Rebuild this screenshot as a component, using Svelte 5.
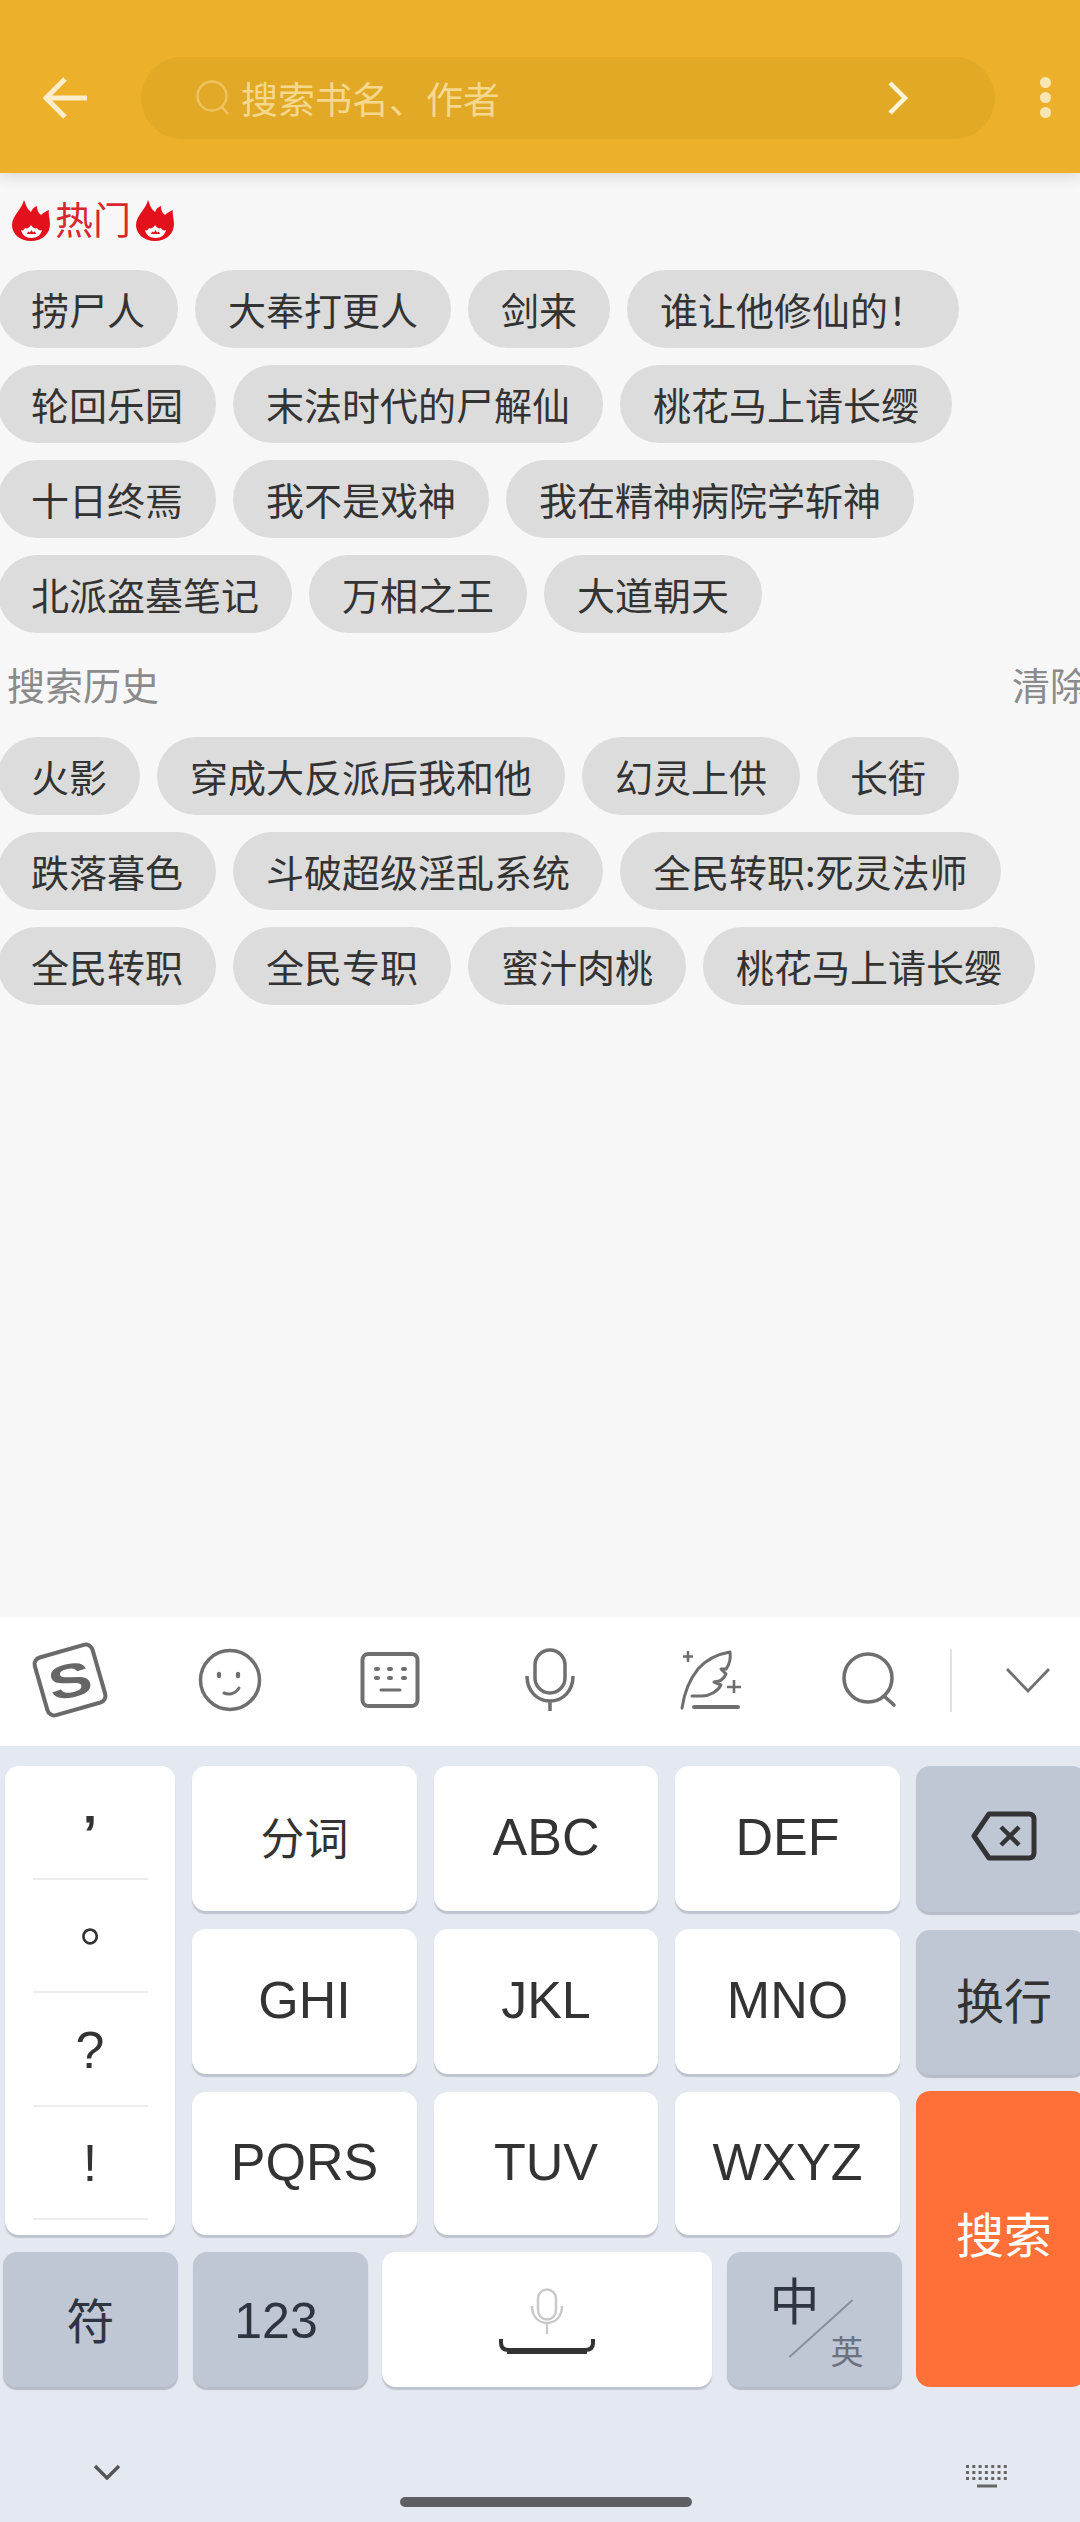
<script>
  const hot = ['捞尸人','大奉打更人','剑来','谁让他修仙的！','轮回乐园','末法时代的尸解仙','桃花马上请长缨','十日终焉','我不是戏神','我在精神病院学斩神','北派盗墓笔记','万相之王','大道朝天'];
  const history = ['火影','穿成大反派后我和他','幻灵上供','长街','跌落暮色','斗破超级淫乱系统','全民转职:死灵法师','全民转职','全民专职','蜜汁肉桃','桃花马上请长缨'];
  const letters = ['分词','ABC','DEF','GHI','JKL','MNO','PQRS','TUV','WXYZ'];
  const punct = [['’','p-comma'],['。','p-stop'],['?','p-q'],['!','p-ex']];
</script>

{#snippet flame()}
  <svg class="flame" viewBox="0 0 38 41" aria-hidden="true">
    <path fill="#e2111b" d="M12 0 C14 5 15 9 19 12 C20 9 22 7 25 6 C25 10 26 13 29 15 C31 13 34 11 37 10 C36 13 38 19 38 24 C38 34 30 41 19 41 C8 41 0 34 0 25 C0 16 10 9 12 0 Z"/>
    <path fill="#fff" d="M9 30 C11 31 12 30 13 28 C15 29 17 28 19 25 C21 28 23 29 25 28 C26 30 28 31 30 30 C29 35 25 38 19.500 38 C14 38 10 35 9 30 Z"/>
    <path fill="#e2111b" d="M15 34 L16 31.500 L18 32.500 L19.500 30 L21 32.500 L23 31.500 L24 34 Z"/>
  </svg>
{/snippet}

<div class="page">
  <header class="top">
    <svg class="back" viewBox="0 0 46 44" aria-hidden="true"><path d="M22 3 3 22l19 19M4 22h40" fill="none" stroke="#fbeccb" stroke-width="5"/></svg>
    <div class="search">
      <svg class="lens" viewBox="0 0 36 36" aria-hidden="true"><circle cx="17" cy="16" r="14.5" fill="none" stroke="#efc264" stroke-width="2.4"/><path d="m27 27 6 7" stroke="#efc264" stroke-width="2.4"/></svg>
      <span class="ph">搜索书名、作者</span>
      <svg class="go" viewBox="0 0 22 34" aria-hidden="true"><path d="m3 2 15 15L3 32" fill="none" stroke="#fdf3d8" stroke-width="4.5"/></svg>
    </div>
    <div class="dots"><i></i><i></i><i></i></div>
  </header>

  <main class="content">
    <div class="hot-title">{@render flame()}<span>热门</span>{@render flame()}</div>
    <div class="chips">
      {#each hot as c}<span class="chip">{c}</span>{/each}
    </div>
    <div class="hist-title"><span>搜索历史</span><span>清除</span></div>
    <div class="chips">
      {#each history as c}<span class="chip">{c}</span>{/each}
    </div>
  </main>

  <section class="ime">
    <div class="tools">
      <div class="tool">
        <svg width="80" height="78" viewBox="0 0 80 78" aria-hidden="true">
          <rect x="-30" y="-30" width="60" height="60" rx="7" fill="#fff" stroke="#6a6a6a" stroke-width="4" transform="translate(40 39) rotate(-16)"/>
          <text class="s" text-anchor="middle" transform="translate(40 39) rotate(-12) scale(1.3 .95)" y="18">S</text>
        </svg>
      </div>
      <div class="tool">
        <svg width="64" height="64" viewBox="0 0 64 64" aria-hidden="true"><circle cx="32" cy="32" r="29.5" fill="none" stroke="#6f6f6f" stroke-width="3.5"/><ellipse cx="21" cy="27" rx="2.200" ry="3.200" fill="#6f6f6f"/><ellipse cx="40" cy="27" rx="2.200" ry="3.200" fill="#6f6f6f"/><path d="M26 45c5 2 11 1 15-5" fill="none" stroke="#6f6f6f" stroke-width="3" stroke-linecap="round"/></svg>
      </div>
      <div class="tool">
        <svg width="60" height="58" viewBox="0 0 60 58" aria-hidden="true"><rect x="2.500" y="3" width="55" height="52" rx="6" fill="none" stroke="#6f6f6f" stroke-width="4"/><g stroke="#6f6f6f" stroke-width="4" stroke-linecap="round"><path d="M16 18h2M29 18h2M43 18h2M16 27h2M29 27h2M43 27h2"/><path d="M21 39h19" stroke-width="3"/></g></svg>
      </div>
      <div class="tool">
        <svg width="50" height="64" viewBox="0 0 50 64" aria-hidden="true"><rect x="10" y="2" width="30" height="43" rx="15" fill="none" stroke="#6f6f6f" stroke-width="3.5"/><path d="M2 28c0 15 10 25 23 25s23-10 23-25M25 53v10" fill="none" stroke="#6f6f6f" stroke-width="3.5"/></svg>
      </div>
      <div class="tool">
        <svg width="64" height="62" viewBox="0 0 64 62" aria-hidden="true"><g fill="none" stroke="#6f6f6f" stroke-width="3" stroke-linecap="round" stroke-linejoin="round"><path d="M4 59C6 45 12 30 20 20 28 11 40 5 52 3c1 7-1 13-4 17h-5l5 5c-2 4-4 6-7 7l-5 1 7 3c-3 6-11 11-19 11H14"/></g><path d="M16 58h44" stroke="#6f6f6f" stroke-width="4" stroke-linecap="round"/><path d="M10 2v11M5 7.500h10M56 31v13M49 38h14" stroke="#6f6f6f" stroke-width="2.600"/></svg>
      </div>
      <div class="tool">
        <svg width="58" height="56" viewBox="0 0 58 56" aria-hidden="true"><circle cx="27" cy="26" r="24" fill="none" stroke="#6f6f6f" stroke-width="3.6"/><path d="m43 44 10 9" stroke="#6f6f6f" stroke-width="3.6" stroke-linecap="round"/></svg>
      </div>
      <span class="rule"></span>
      <svg class="fold" width="46" height="26" viewBox="0 0 46 26" aria-hidden="true"><path d="M2 2l21 22L44 2" fill="none" stroke="#707070" stroke-width="2.8"/></svg>
    </div>

    <div class="keys">
      <div class="left">
        <div class="grid">
          <div class="key punct">
            {#each punct as [p, cls]}<span class="cell {cls}">{p}</span>{/each}
          </div>
          {#each letters as k, i}
            <div class="key" class:cjk={i === 0}>{k}</div>
          {/each}
        </div>
        <div class="bottom">
          <div class="key gray narrow cjk2">符</div>
          <div class="key gray narrow num">123</div>
          <div class="key space">
            <svg width="34" height="46" viewBox="0 0 34 46" aria-hidden="true"><rect x="8" y="1.500" width="18" height="30" rx="9" fill="none" stroke="#c9c9c9" stroke-width="2.4"/><path d="M2 18c0 10 6 17 15 17s15-7 15-17M17 35v11" fill="none" stroke="#c9c9c9" stroke-width="2.4"/></svg>
            <svg width="96" height="16" viewBox="0 0 96 16" aria-hidden="true"><path d="M2 0v4c0 5 3 7 8 7h76c5 0 8-2 8-7V0" fill="none" stroke="#333" stroke-width="4"/><path d="M8 9h80v6H8z" fill="#333"/></svg>
          </div>
          <div class="key gray narrow lang">
            <span class="zh">中</span><span class="slash"></span><span class="en">英</span>
          </div>
        </div>
      </div>
      <div class="right">
        <div class="key gray side">
          <svg width="66" height="50" viewBox="0 0 66 50" aria-hidden="true"><path d="M18 3h40c3 0 5 2 5 5v34c0 3-2 5-5 5H18L3 25Z" fill="none" stroke="#333" stroke-width="5" stroke-linejoin="round"/><path d="m30 16 18 18M48 16 30 34" stroke="#333" stroke-width="4.500"/></svg>
        </div>
        <div class="key gray side cjk3">换行</div>
        <div class="key go-key">搜索</div>
      </div>
    </div>

    <footer class="foot">
      <svg width="28" height="16" viewBox="0 0 28 16" aria-hidden="true"><path d="m2 2 12 12L26 2" fill="none" stroke="#555" stroke-width="3.4"/></svg>
      <svg width="44" height="24" viewBox="0 0 44 24" aria-hidden="true"><g stroke="#666" stroke-width="3" stroke-dasharray="3 3.300"><path d="M1 2.500h42M1 8.500h42M1 14.500h42"/></g><path d="M12 22h20" stroke="#666" stroke-width="3"/></svg>
      <span class="home"></span>
    </footer>
  </section>
</div>

<style>
  :global(body) { margin: 0; background: #f7f7f7; }
  .page {
    width: 1080px; height: 2522px; display: flex; flex-direction: column; overflow: hidden;
    font-family: "Noto Sans CJK SC", sans-serif; color: #333;
  }

  .top {
    height: 173px; flex: none; background: #edb02b; display: flex; align-items: center;
    padding: 22px 0 0 43px; box-sizing: border-box; box-shadow: 0 4px 14px rgba(0,0,0,.12); position: relative;
  }
  .back { width: 46px; height: 44px; flex: none; }
  .search {
    width: 854px; height: 82px; margin-left: 52px; border-radius: 41px; background: #e1a925;
    display: flex; align-items: center; padding: 0 86px 0 54px; box-sizing: border-box; flex: none;
  }
  .lens { width: 36px; height: 36px; flex: none; }
  .ph { font-size: 37px; line-height: 50px; color: #f5d88e; margin-left: 10px; flex: 1; }
  .go { width: 22px; height: 34px; flex: none; }
  .dots { display: flex; flex-direction: column; gap: 4px; margin-left: 45px; }
  .dots i { width: 11px; height: 11px; border-radius: 50%; background: #f9e6b4; }

  .content { flex: 1; min-height: 0; }
  .hot-title {
    display: flex; align-items: center; gap: 5px; height: 41px; margin: 27px 0 29px 12px;
    color: #d92731; font-size: 38px; line-height: 41px;
  }
  .hot-title span { padding-bottom: 6px; }
  .flame { width: 38px; height: 41px; flex: none; }
  .chips { display: flex; flex-wrap: wrap; gap: 17px; margin-left: -2px; }
  .chip {
    height: 78px; line-height: 78px; padding: 0 33px; border-radius: 39px; background: #dcdcdc;
    font-size: 38px; color: #333; white-space: nowrap;
  }
  .hist-title {
    display: flex; justify-content: space-between; margin: 28px -8px 30px 7px; height: 46px; line-height: 46px;
    font-size: 38px; color: #8b8b8b;
  }

  .ime { flex: none; background: #e4e8f0; }
  .tools {
    height: 129px; background: #fff; display: grid; grid-template-columns: repeat(6, 160px) 2px 1fr;
    align-items: center; margin-left: -10px; padding-bottom: 3px; box-sizing: border-box;
  }
  .tool { display: flex; justify-content: center; }
  .s { font: 700 50px "Liberation Sans", sans-serif; fill: #666; }
  .rule { height: 63px; background: #e2e2e2; }
  .fold { justify-self: center; margin-left: 24px; }

  .keys { display: flex; padding: 20px 0 0 5px; }
  .left { width: 896px; flex: none; }
  .grid {
    display: grid; grid-template-columns: 170px 225px 224px 225px; grid-template-rows: 145px 145px 143px;
    gap: 18px 17px;
  }
  .key {
    background: #fff; border-radius: 14px; display: flex; align-items: center; justify-content: center;
    box-shadow: 0 3px 1px rgba(120,125,140,.35); font: 52px "Liberation Sans", "Noto Sans CJK SC", sans-serif; color: #333;
    box-sizing: border-box; padding-bottom: 4px;
  }
  .cjk { font: 44px "Noto Sans CJK SC", sans-serif; padding-bottom: 6px; }
  .punct { grid-row: 1 / 4; flex-direction: column; justify-content: flex-start; padding-bottom: 0; }
  .cell {
    width: 100%; height: 113.5px; flex: none; display: flex; align-items: center; justify-content: center;
    position: relative; font-size: 52px; line-height: 1; box-sizing: border-box;
  }
  .cell::after {
    content: ""; position: absolute; left: 28px; right: 27px; bottom: 0; height: 2px; background: #ececec;
  }
  .p-comma { font-weight: 700; padding-top: 22px; }
  .p-stop { font-family: "Noto Sans CJK SC", sans-serif; padding: 0 0 34px 32px; }
  .bottom { display: flex; gap: 14.5px; margin: 17px 0 0 -2px; height: 135px; }
  .gray { background: #bfc7d4; box-shadow: 0 3px 1px rgba(100,105,120,.35); color: #2f3540; }
  .narrow { width: 175px; flex: none; }
  .cjk2 { font: 48px "Noto Sans CJK SC", sans-serif; }
  .num { font-size: 50px; padding: 2px 8px 0 0; }
  .space { width: 330px; flex: none; flex-direction: column; gap: 5px; padding: 4px 0 0; }
  .lang { position: relative; }
  .zh { position: absolute; left: 43px; top: 16px; font: 50px/60px "Noto Sans CJK SC", sans-serif; }
  .en { position: absolute; left: 104px; top: 76px; font: 33px/44px "Noto Sans CJK SC", sans-serif; color: #6b7280; }
  .slash {
    position: absolute; left: 93px; top: 34px; width: 2px; height: 85px; background: #8a909b; transform: rotate(48deg);
  }
  .right {
    width: 170px; flex: none; margin-left: 15px; margin-right: -6px; display: flex; flex-direction: column; gap: 18px;
  }
  .side { height: 146px; flex: none; padding: 0 0 6px 6px; }
  .cjk3 { font: 48px "Noto Sans CJK SC", sans-serif; height: 145px; padding: 0 0 10px 6px; color: #333; }
  .go-key {
    flex: 1; margin-top: -2px; background: #ff7038; color: #fff; font: 48px "Noto Sans CJK SC", sans-serif; box-shadow: none; padding: 0 0 14px 6px;
  }

  .foot {
    height: 135px; display: flex; justify-content: space-between; align-items: flex-start;
    padding: 77px 71px 0 93px; box-sizing: border-box; position: relative;
  }
  .home {
    position: absolute; left: 400px; top: 110px; width: 292px; height: 10px; border-radius: 5px; background: #5c5f63;
  }
</style>
